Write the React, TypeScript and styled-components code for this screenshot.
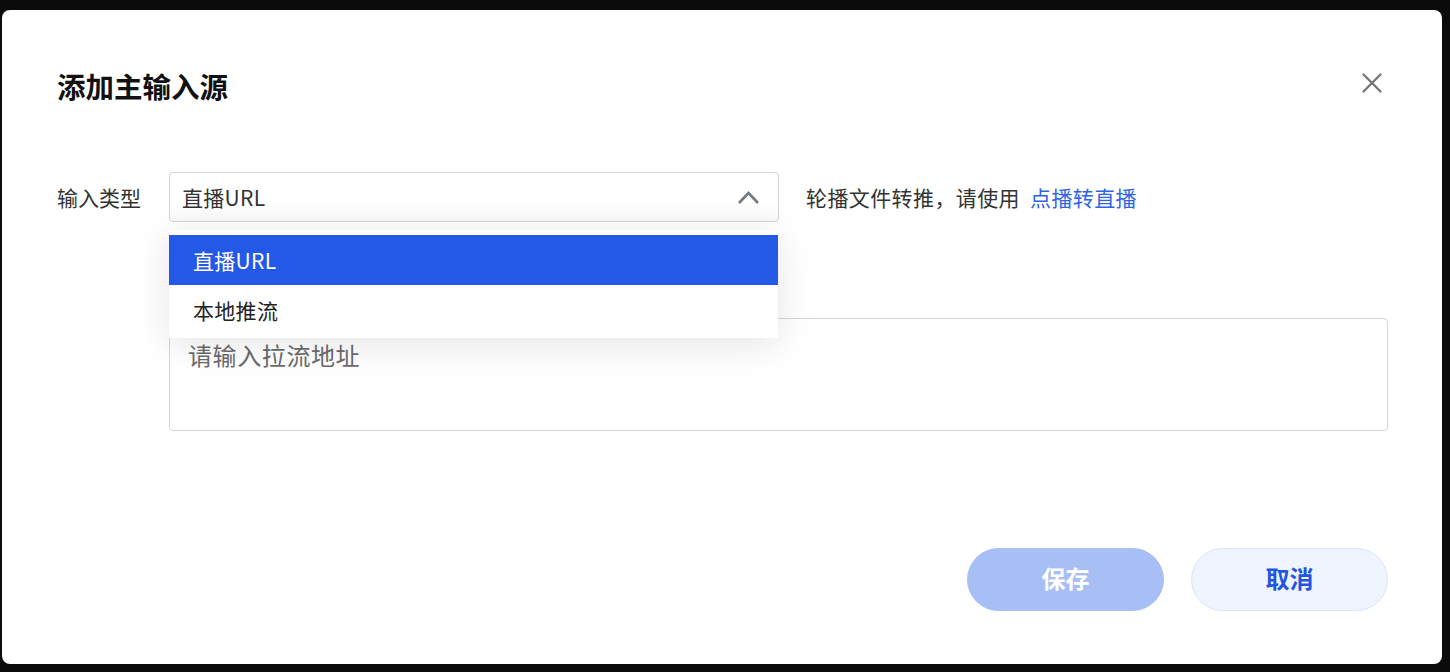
import React from "react";
import styled, { createGlobalStyle } from "styled-components";

const GlobalStyle = createGlobalStyle`
  html, body {
    margin: 0;
    padding: 0;
    background: #0b0b0b;
  }
  body {
    font-family: "Noto Sans CJK SC", "Noto Sans", "Liberation Sans", sans-serif;
  }
`;

const Backdrop = styled.div`
  width: 1450px;
  height: 672px;
  padding: 10px 8px 8px 2px;
  box-sizing: border-box;
`;

const Modal = styled.div`
  width: 1440px;
  height: 654px;
  box-sizing: border-box;
  background: #fff;
  border-radius: 8px;
  padding: 56px 54px 53px 55px;
  display: flex;
  flex-direction: column;
`;

const Header = styled.div`
  display: flex;
  align-items: center;
  justify-content: space-between;
  height: 40px;
`;

const Title = styled.h2`
  margin: 0;
  font-size: 28.5px;
  line-height: 40px;
  font-weight: 700;
  color: #111;
`;

const CloseButton = styled.button`
  border: none;
  background: none;
  padding: 0;
  margin-right: 4px;
  margin-top: -6px;
  width: 24px;
  height: 24px;
  display: flex;
  align-items: center;
  justify-content: center;
  cursor: pointer;
`;

const Body = styled.div`
  flex: 1;
  display: flex;
  flex-direction: column;
  margin-top: 66px;
`;

const Row = styled.div<{ $top?: number }>`
  display: flex;
  align-items: ${(p) => (p.$top ? "flex-start" : "center")};
  margin-top: ${(p) => p.$top ?? 0}px;
`;

const Label = styled.div`
  width: 112px;
  flex-shrink: 0;
  font-size: 21px;
  line-height: 30px;
  color: #333;
`;

const SelectWrap = styled.div`
  position: relative;
  width: 610px;
`;

const SelectBox = styled.div`
  height: 50px;
  box-sizing: border-box;
  border: 1px solid #d4d4d4;
  border-radius: 4px;
  background: linear-gradient(#fff 60%, #f9f9f9);
  display: flex;
  align-items: center;
  justify-content: space-between;
  padding: 0 18px 0 12px;
  font-size: 21px;
  color: #333;
  letter-spacing: 0.3px;
`;

const Dropdown = styled.ul`
  position: absolute;
  top: 58px;
  left: 0;
  width: 609px;
  margin: 0;
  padding: 5px 0 3px;
  list-style: none;
  background: #fff;
  box-shadow: 0 6px 34px rgba(0, 0, 0, 0.11);
  z-index: 10;
`;

const Option = styled.li<{ $active?: boolean }>`
  height: 50px;
  display: flex;
  align-items: center;
  padding-left: 24px;
  font-size: 21px;
  letter-spacing: 0.3px;
  color: ${(p) => (p.$active ? "#fff" : "#222")};
  background: ${(p) => (p.$active ? "#2458e6" : "#fff")};
`;

const Hint = styled.div`
  margin-left: 27px;
  font-size: 21px;
  letter-spacing: 0.4px;
  color: #333;
`;

const Link = styled.a`
  margin-left: 10px;
  color: #2f63e6;
  text-decoration: none;
`;

const TextArea = styled.textarea`
  width: 1219px;
  height: 113px;
  box-sizing: border-box;
  border: 1px solid #d6d6d6;
  border-radius: 4px;
  padding: 19px 18px;
  font-family: inherit;
  font-size: 24px;
  line-height: 34px;
  letter-spacing: 0.6px;
  color: #333;
  resize: none;
  outline: none;
  &::placeholder {
    color: #6b6b6b;
  }
`;

const Footer = styled.div`
  display: flex;
  justify-content: flex-end;
  gap: 27px;
`;

const PillButton = styled.button<{ $variant: "primary" | "ghost" }>`
  width: 197px;
  height: 63px;
  border-radius: 32px;
  padding: 0 0 4px;
  font-family: inherit;
  font-size: 24px;
  line-height: 30px;
  font-weight: 600;
  cursor: pointer;
  box-sizing: border-box;
  border: 1px solid ${(p) => (p.$variant === "primary" ? "#a8bff6" : "#dae5fb")};
  background: ${(p) => (p.$variant === "primary" ? "#a8bff6" : "#eff4fe")};
  color: ${(p) => (p.$variant === "primary" ? "#fff" : "#1f55e0")};
`;

const App: React.FC = () => {
  return (
    <>
      <GlobalStyle />
      <Backdrop>
        <Modal>
          <Header>
            <Title>添加主输入源</Title>
            <CloseButton aria-label="关闭">
              <svg width="20" height="20" viewBox="0 0 20 20">
                <path d="M1.5 1.5 L18.5 18.5 M18.5 1.5 L1.5 18.5" stroke="#777" strokeWidth="2.4" strokeLinecap="round" />
              </svg>
            </CloseButton>
          </Header>
          <Body>
            <Row>
              <Label>输入类型</Label>
              <SelectWrap>
                <SelectBox>
                  <span>直播URL</span>
                  <svg width="23" height="15" viewBox="0 0 23 15">
                    <path d="M2 13 L11.5 3 L21 13" fill="none" stroke="#747a82" strokeWidth="2.6" />
                  </svg>
                </SelectBox>
                <Dropdown>
                  <Option $active>直播URL</Option>
                  <Option>本地推流</Option>
                </Dropdown>
              </SelectWrap>
              <Hint>
                轮播文件转推，请使用<Link href="#">点播转直播</Link>
              </Hint>
            </Row>
            <Row $top={96}>
              <Label />
              <TextArea placeholder="请输入拉流地址" />
            </Row>
          </Body>
          <Footer>
            <PillButton $variant="primary">保存</PillButton>
            <PillButton $variant="ghost">取消</PillButton>
          </Footer>
        </Modal>
      </Backdrop>
    </>
  );
};

export default App;
